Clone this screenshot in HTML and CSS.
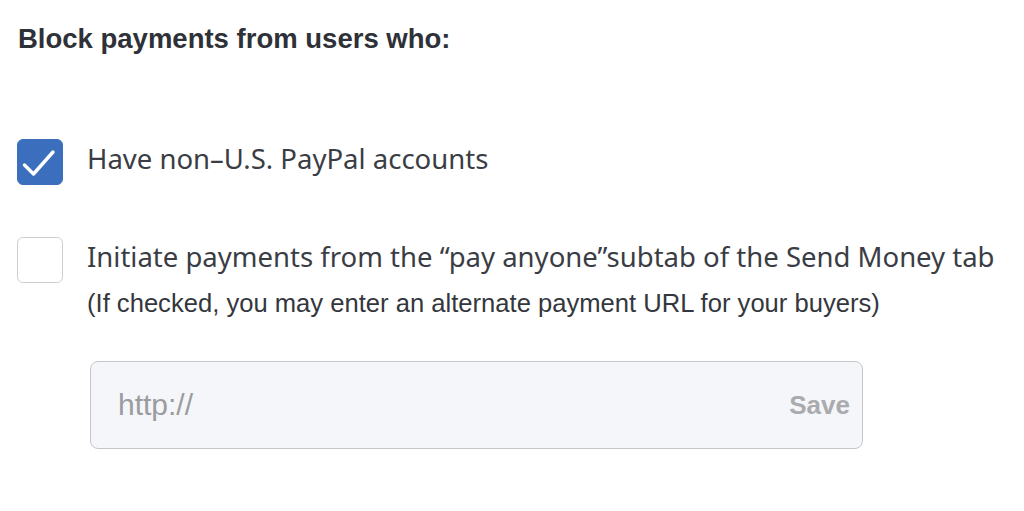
FILE: index.html
```html
<!DOCTYPE html>
<html>
<head>
<meta charset="utf-8">
<link rel="stylesheet" href="styles.css">
</head>
<body>
<div class="panel">
  <h2 class="title">Block payments from users who:</h2>
  <div class="option">
    <span class="box checked">
      <svg viewBox="0 0 46 46" width="46" height="46"><path d="M7.5 26 L16.5 35 L36 13" fill="none" stroke="#fff" stroke-width="3.4" stroke-linecap="round" stroke-linejoin="round"/></svg>
    </span>
    <div class="text">
      <div class="label">Have non–U.S. PayPal accounts</div>
    </div>
  </div>
  <div class="option second">
    <span class="box"></span>
    <div class="text">
      <div class="label">Initiate payments from the “pay anyone”subtab of the Send Money tab</div>
      <div class="hint">(If checked, you may enter an alternate payment URL for your buyers)</div>
    </div>
  </div>
  <div class="url">
    <span class="placeholder">http://</span>
    <span class="save">Save</span>
  </div>
</div>
</body>
</html>
```
FILE: styles.css
```css
html, body { margin: 0; padding: 0; background: #fff; }
.panel { padding: 22px 0 0 18px; }
.title {
  margin: 0;
  font-family: "Liberation Sans", Arial, sans-serif;
  font-weight: bold;
  font-size: 27.5px;
  color: #2e3137;
  line-height: 34px;
}
.option { display: flex; align-items: flex-start; margin-top: 83px; }
.option.second { margin-top: 52px; }
.box {
  flex: none;
  width: 44px; height: 44px;
  border: 1px solid #cfcfcf;
  border-radius: 6px;
  margin-left: -1px;
  box-sizing: content-box;
  display: flex;
}
.box svg { margin: -1px; }
.box.checked { background: #3b6fbd; border-color: #3b6fbd; }
.text { margin-left: 24px; padding-top: 1px; }
.label {
  font-family: "Noto Sans", "Open Sans", sans-serif;
  font-size: 27.5px;
  color: #3a3d44;
  line-height: 38px;
  white-space: nowrap;
}
.hint {
  font-family: "Liberation Sans", Arial, sans-serif;
  font-size: 25.6px;
  color: #34373d;
  line-height: 30px;
  margin-top: 12px;
  white-space: nowrap;
}
.url {
  margin: 43px 0 0 72px;
  width: 773px; height: 88px;
  box-sizing: border-box;
  border: 1.5px solid #c4c6ca;
  border-radius: 8px;
  background: #f5f6f9;
  display: flex;
  align-items: center;
  justify-content: space-between;
  padding: 0 12px 0 27px;
}
.placeholder {
  font-family: "Liberation Sans", Arial, sans-serif;
  font-size: 30px;
  color: #9a9ca0;
}
.save {
  font-family: "Liberation Sans", Arial, sans-serif;
  font-weight: bold;
  font-size: 26px;
  color: #a9abae;
}
```
